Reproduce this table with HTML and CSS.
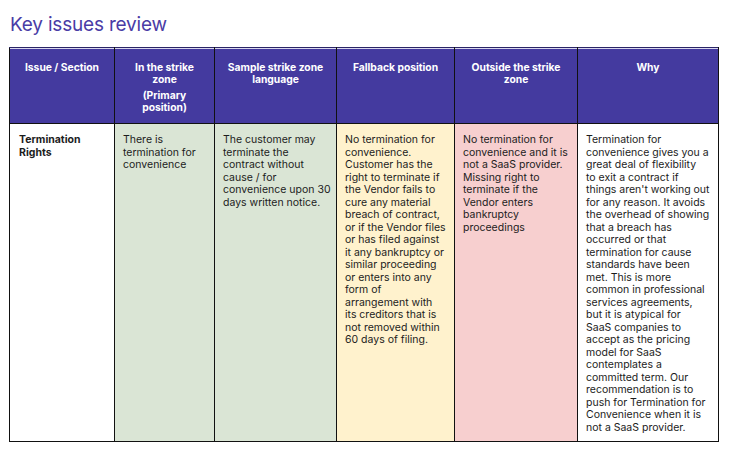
FILE: index.html
```html
<!DOCTYPE html>
<html lang="en">
<head>
<meta charset="utf-8">
<title>Key issues review</title>
<link rel="stylesheet" href="styles.css">
</head>
<body>
<h1 class="title">Key issues review</h1>
<table class="issues">
  <colgroup>
    <col class="c1"><col class="c2"><col class="c3"><col class="c4"><col class="c5"><col class="c6">
  </colgroup>
  <thead>
    <tr>
      <th><p>Issue / Section</p></th>
      <th><p>In the strike<br>zone</p><p class="sub">(Primary<br>position)</p></th>
      <th><p>Sample strike zone<br>language</p></th>
      <th><p>Fallback position</p></th>
      <th><p>Outside the strike<br>zone</p></th>
      <th><p>Why</p></th>
    </tr>
  </thead>
  <tbody>
    <tr>
      <td class="issue">Termination<br>Rights</td>
      <td class="green">There is<br>termination for<br>convenience</td>
      <td class="green">The customer may<br>terminate the<br>contract without<br>cause / for<br>convenience upon 30<br>days written notice.</td>
      <td class="yellow">No termination for<br>convenience.<br>Customer has the<br>right to terminate if<br>the Vendor fails to<br>cure any material<br>breach of contract,<br>or if the Vendor files<br>or has filed against<br>it any bankruptcy or<br>similar proceeding<br>or enters into any<br>form of<br>arrangement with<br>its creditors that is<br>not removed within<br>60 days of filing.</td>
      <td class="pink">No termination for<br>convenience and it is<br>not a SaaS provider.<br>Missing right to<br>terminate if the<br>Vendor enters<br>bankruptcy<br>proceedings</td>
      <td class="why">Termination for<br>convenience gives you a<br>great deal of flexibility<br>to exit a contract if<br>things aren't working out<br>for any reason. It avoids<br>the overhead of showing<br>that a breach has<br>occurred or that<br>termination for cause<br>standards have been<br>met. This is more<br>common in professional<br>services agreements,<br>but it is atypical for<br>SaaS companies to<br>accept as the pricing<br>model for SaaS<br>contemplates a<br>committed term. Our<br>recommendation is to<br>push for Termination for<br>Convenience when it is<br>not a SaaS provider.</td>
    </tr>
  </tbody>
</table>
</body>
</html>
```
FILE: styles.css
```css
html, body {
  margin: 0;
  padding: 0;
  background: #ffffff;
}
body {
  font-family: Inter, "Liberation Sans", sans-serif;
  color: #1a1a1a;
  padding: 13px 0 0 9px;
}
.title {
  margin: 0 0 10px 1px;
  font-family: Inter, Roboto, sans-serif;
  font-weight: 400;
  font-size: 19px;
  line-height: 24px;
  color: #4a3ca6;
  letter-spacing: -0.2px;
}
.issues {
  border-collapse: collapse;
  table-layout: fixed;
  width: 709px;
  border: 1.5px solid #111;
}
.c1 { width: 105px; }
.c2 { width: 100px; }
.c3 { width: 122px; }
.c4 { width: 118px; }
.c5 { width: 123px; }
.c6 { width: 141px; }
.issues th {
  background: #443a9f;
  color: #ffffff;
  font-size: 10.3px;
  font-weight: 700;
  line-height: 12px;
  text-align: center;
  vertical-align: top;
  height: 76px;
  padding: 13px 4px 0;
  border: 1.5px solid #111;
  border-top: 1px solid #2a2566;
  box-shadow: inset 0 1px 0 #d9d6ee;
  box-sizing: border-box;
  white-space: nowrap;
}
.issues th p {
  margin: 0;
}
.issues th p.sub {
  margin-top: 4px;
}
.issues td {
  vertical-align: top;
  font-size: 10.5px;
  line-height: 12.5px;
  padding: 10px 4px 0 8px;
  height: 318px;
  border: 1.5px solid #111;
  box-sizing: border-box;
  color: #1c1c1c;
  white-space: nowrap;
}
.issues td.issue {
  font-weight: 700;
  padding-left: 9px;
}
.green { background: #dae5d5; }
.yellow { background: #fff2cd; }
.pink { background: #f7cfcf; }
.why { background: #ffffff; }
```
